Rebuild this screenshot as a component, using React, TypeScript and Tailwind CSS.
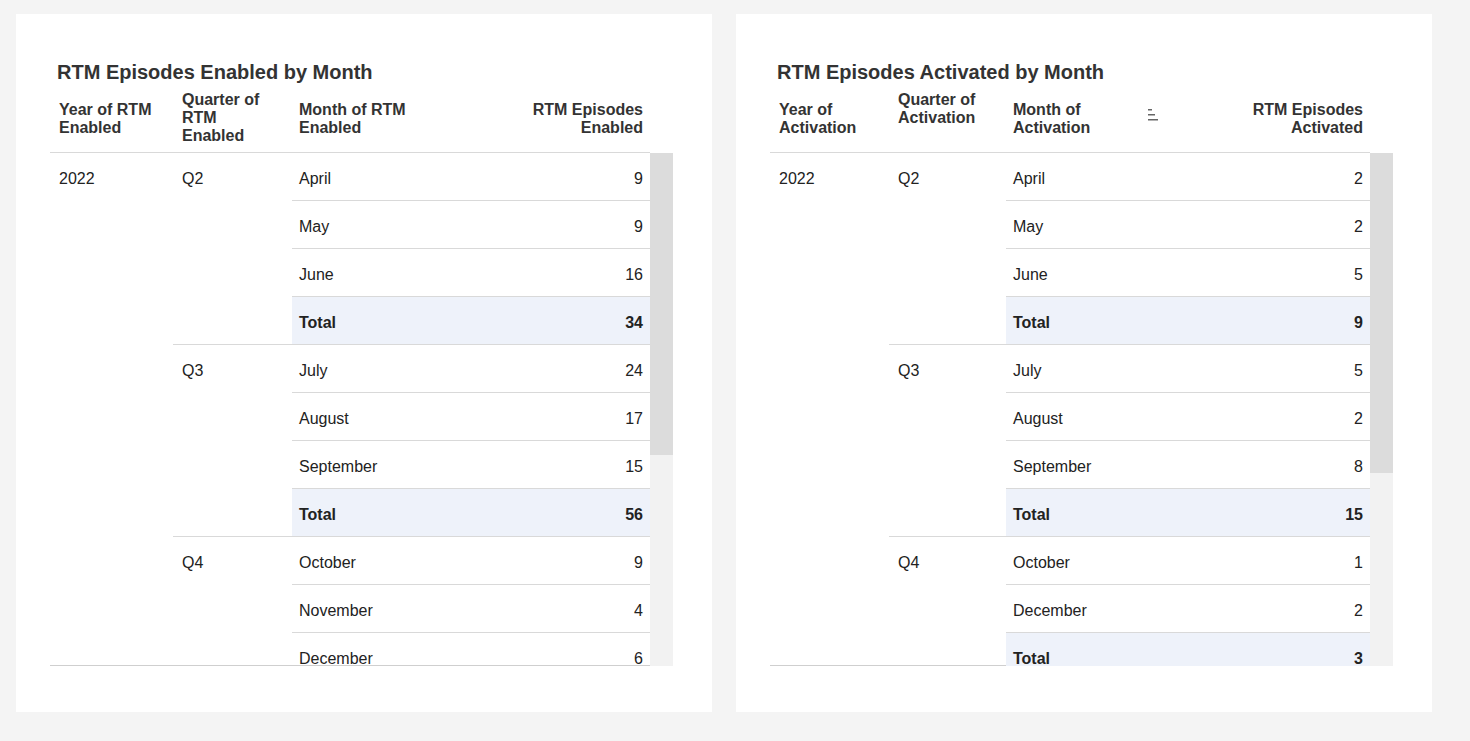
import React from 'react';

type Group = { q: string; rows: [string, number][]; total?: number };

interface TableProps {
  title: string;
  heads: [string, string, string, string];
  groups: Group[];
  thumb: number;
  cols: [number, number];
  sortIcon?: boolean;
}

const PivotCard: React.FC<TableProps> = ({ title, heads, groups, thumb, cols, sortIcon }) => (
  <div className="bg-white w-[696px] h-[698px] pt-[46px] pl-[34px]">
    <div className="text-[20px] font-bold text-[#333] leading-[24px] pl-[7px]">{title}</div>
    <div className="mt-[4px] w-[623px]">
      <div className="flex h-[65px] text-[16px] font-bold text-[#333] leading-[18px] border-b border-[#d9d9d9] w-[600px]">
        <div style={{ width: cols[0] }} className="pl-[9px] pt-[13px] pr-[4px]">{heads[0]}</div>
        <div style={{ width: cols[1] }} className="pl-[9px] pt-[3px] pr-[30px]">{heads[1]}</div>
        <div className="flex-1 pl-[7px] pt-[13px] relative">
          <div className="w-[125px]">{heads[2]}</div>
          {sortIcon && (
            <svg className="absolute left-[142px] top-[19px]" width="12" height="16" viewBox="0 0 12 16">
              <rect x="0" y="2" width="4" height="1.5" fill="#666" />
              <rect x="0" y="7" width="7" height="1.5" fill="#666" />
              <rect x="0" y="12" width="10" height="1.5" fill="#666" />
            </svg>
          )}
        </div>
        <div className="w-[160px] text-right pr-[7px] pt-[13px]">{heads[3]}</div>
      </div>
      <div className="flex h-[513px] overflow-hidden text-[16px] text-[#222]">
        <div className="w-[600px] border-b border-[#cfcfcf]">
          <div className="flex">
            <div style={{ width: cols[0] }} className="pl-[9px] pt-[14px]">2022</div>
            <div className="flex-1">
              {groups.map((g, gi) => (
                <div key={g.q} className={`flex ${gi > 0 ? 'border-t border-[#d9d9d9]' : ''}`}>
                  <div style={{ width: cols[1] }} className="pl-[9px] pt-[14px]">{g.q}</div>
                  <div className="flex-1">
                    {g.rows.map(([m, v], i) => (
                      <div key={m} className={`flex items-center h-[48px] pt-[4px] px-[7px] ${i < g.rows.length - 1 || g.total !== undefined ? 'border-b border-[#d9d9d9]' : ''}`}>
                        <span className="flex-1">{m}</span>
                        <span>{v}</span>
                      </div>
                    ))}
                    {g.total !== undefined && (
                      <div className="flex items-center h-[47px] pt-[4px] px-[7px] bg-[#eef2fa] font-bold">
                        <span className="flex-1">Total</span>
                        <span>{g.total}</span>
                      </div>
                    )}
                  </div>
                </div>
              ))}
            </div>
          </div>
        </div>
        <div className="w-[23px] bg-[#f2f2f2]">
          <div className="bg-[#dcdcdc]" style={{ height: thumb }} />
        </div>
      </div>
    </div>
  </div>
);

export default function App() {
  return (
    <div className="min-h-[741px] bg-[#f4f4f4] flex gap-[24px] pl-[16px] pt-[14px]" style={{ fontFamily: '"Liberation Sans", Arial, sans-serif' }}>
      <PivotCard
        title="RTM Episodes Enabled by Month"
        heads={['Year of RTM Enabled', 'Quarter of RTM Enabled', 'Month of RTM Enabled', 'RTM Episodes Enabled']}
        thumb={302}
        cols={[123, 119]}
        groups={[
          { q: 'Q2', rows: [['April', 9], ['May', 9], ['June', 16]], total: 34 },
          { q: 'Q3', rows: [['July', 24], ['August', 17], ['September', 15]], total: 56 },
          { q: 'Q4', rows: [['October', 9], ['November', 4], ['December', 6]], total: 19 },
        ]}
      />
      <PivotCard
        title="RTM Episodes Activated by Month"
        heads={['Year of Activation', 'Quarter of Activation', 'Month of Activation', 'RTM Episodes Activated']}
        thumb={320}
        cols={[119, 117]}
        sortIcon
        groups={[
          { q: 'Q2', rows: [['April', 2], ['May', 2], ['June', 5]], total: 9 },
          { q: 'Q3', rows: [['July', 5], ['August', 2], ['September', 8]], total: 15 },
          { q: 'Q4', rows: [['October', 1], ['December', 2]], total: 3 },
        ]}
      />
    </div>
  );
}
